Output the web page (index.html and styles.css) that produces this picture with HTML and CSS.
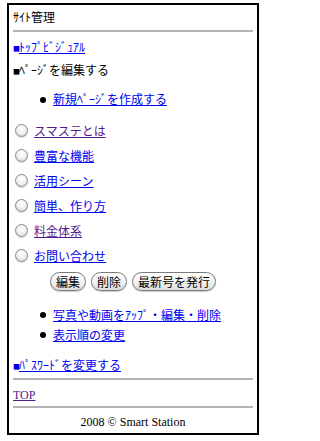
FILE: index.html
```html
<!DOCTYPE html>
<html lang="ja">
<head>
<meta charset="utf-8">
<title>ｻｲﾄ管理</title>
<link rel="stylesheet" href="styles.css">
</head>
<body>
<div class="frame">
  <div class="title">ｻｲﾄ管理</div>
  <div class="rule rule-top"></div>
  <div class="line l-visual"><a href="#"><span class="sq">■</span>ﾄｯﾌﾟﾋﾞｼﾞｭｱﾙ</a></div>
  <div class="line l-edit"><span class="sq">■</span>ﾍﾟｰｼﾞを編集する</div>
  <ul class="bullets b-new">
    <li><a href="#">新規ﾍﾟｰｼﾞを作成する</a></li>
  </ul>
  <div class="radios">
    <label class="radio-row"><span class="radio"></span><a href="#" class="visited">スマステとは</a></label>
    <label class="radio-row"><span class="radio"></span><a href="#">豊富な機能</a></label>
    <label class="radio-row"><span class="radio"></span><a href="#">活用シーン</a></label>
    <label class="radio-row"><span class="radio"></span><a href="#">簡単、作り方</a></label>
    <label class="radio-row"><span class="radio"></span><a href="#" class="visited">料金体系</a></label>
    <label class="radio-row"><span class="radio"></span><a href="#">お問い合わせ</a></label>
  </div>
  <div class="buttons">
    <button class="btn">編集</button>
    <button class="btn">削除</button>
    <button class="btn">最新号を発行</button>
  </div>
  <ul class="bullets b-media">
    <li><a href="#">写真や動画をｱｯﾌﾟ・編集・削除</a></li>
    <li><a href="#">表示順の変更</a></li>
  </ul>
  <div class="line l-pass"><a href="#"><span class="sq">■</span>ﾊﾟｽﾜｰﾄﾞを変更する</a></div>
  <div class="rule rule-mid"></div>
  <div class="line l-top"><a href="#" class="visited latin">TOP</a></div>
  <div class="rule rule-low"></div>
  <div class="footer">2008 © Smart Station</div>
</div>
</body>
</html>
```
FILE: styles.css
```css
html, body {
  margin: 0;
  padding: 0;
  background: #ffffff;
}
body {
  font-family: "Noto Sans CJK JP", "Liberation Serif", serif;
  font-size: 12px;
  color: #000;
}
.frame {
  margin: 3px 7px 0 7px;
  border: 2px solid #000;
  padding: 4px 4px 3px 4px;
  box-sizing: content-box;
  width: 240px;
}
a {
  color: #0000ee;
  text-decoration: underline;
}
a.visited {
  color: #551a8b;
}
.sq {
  font-size: 7px;
  display: inline-block;
  width: 6px;
  vertical-align: 1px;
}
.title, .line, .footer {
  height: 16px;
  line-height: 16px;
  white-space: nowrap;
}
.rule {
  height: 2px;
  background: #b4b4b4;
}
.rule-top { margin-top: 5px; }
.l-visual { margin-top: 7px; }
.l-edit { margin-top: 7px; }
.bullets {
  list-style: none;
  margin: 0;
  padding: 0 0 0 40px;
}
.bullets li {
  position: relative;
  line-height: 16px;
  height: 16px;
  white-space: nowrap;
}
.bullets li::before {
  content: "";
  position: absolute;
  left: -13px;
  top: 6px;
  width: 6px;
  height: 6px;
  border-radius: 50%;
  background: #000;
}
.b-new { margin-top: 13px; }
.radios {
  margin-top: 11px;
  display: flex;
  flex-direction: column;
}
.radio-row {
  height: 25px;
  display: flex;
  align-items: center;
  gap: 6px;
  padding-left: 2px;
}
.radio {
  width: 11px;
  height: 11px;
  border-radius: 50%;
  border: 1px solid #8a8a8a;
  background: radial-gradient(circle at 50% 35%, #ffffff 0%, #f2f2f2 45%, #cfcfcf 100%);
  box-shadow: 0 1px 1px rgba(0,0,0,0.15);
  flex: none;
}
.buttons {
  margin-top: 4px;
  display: flex;
  justify-content: center;
  gap: 5px;
}
.btn {
  height: 19px;
  padding: 0 5px;
  border: 1px solid #7a7a7a;
  border-radius: 10px;
  background: linear-gradient(#ffffff 0%, #f4f4f4 50%, #dcdcdc 100%);
  font-family: "Noto Sans CJK JP", sans-serif;
  font-size: 12px;
  line-height: 17px;
  color: #000;
  box-shadow: 0 1px 1px rgba(0,0,0,0.2);
}
.b-media { margin-top: 14px; }
.b-media li {
  height: 20px;
  line-height: 20px;
}
.b-media li::before { top: 7px; }
.l-pass { margin-top: 12px; }
.rule-mid { margin-top: 5px; }
.l-top { margin-top: 6px; }
.latin { font-family: "Liberation Serif", serif; }
.rule-low { margin-top: 4px; }
.footer {
  margin-top: 6px;
  text-align: center;
  font-family: "Liberation Serif", serif;
}
```
